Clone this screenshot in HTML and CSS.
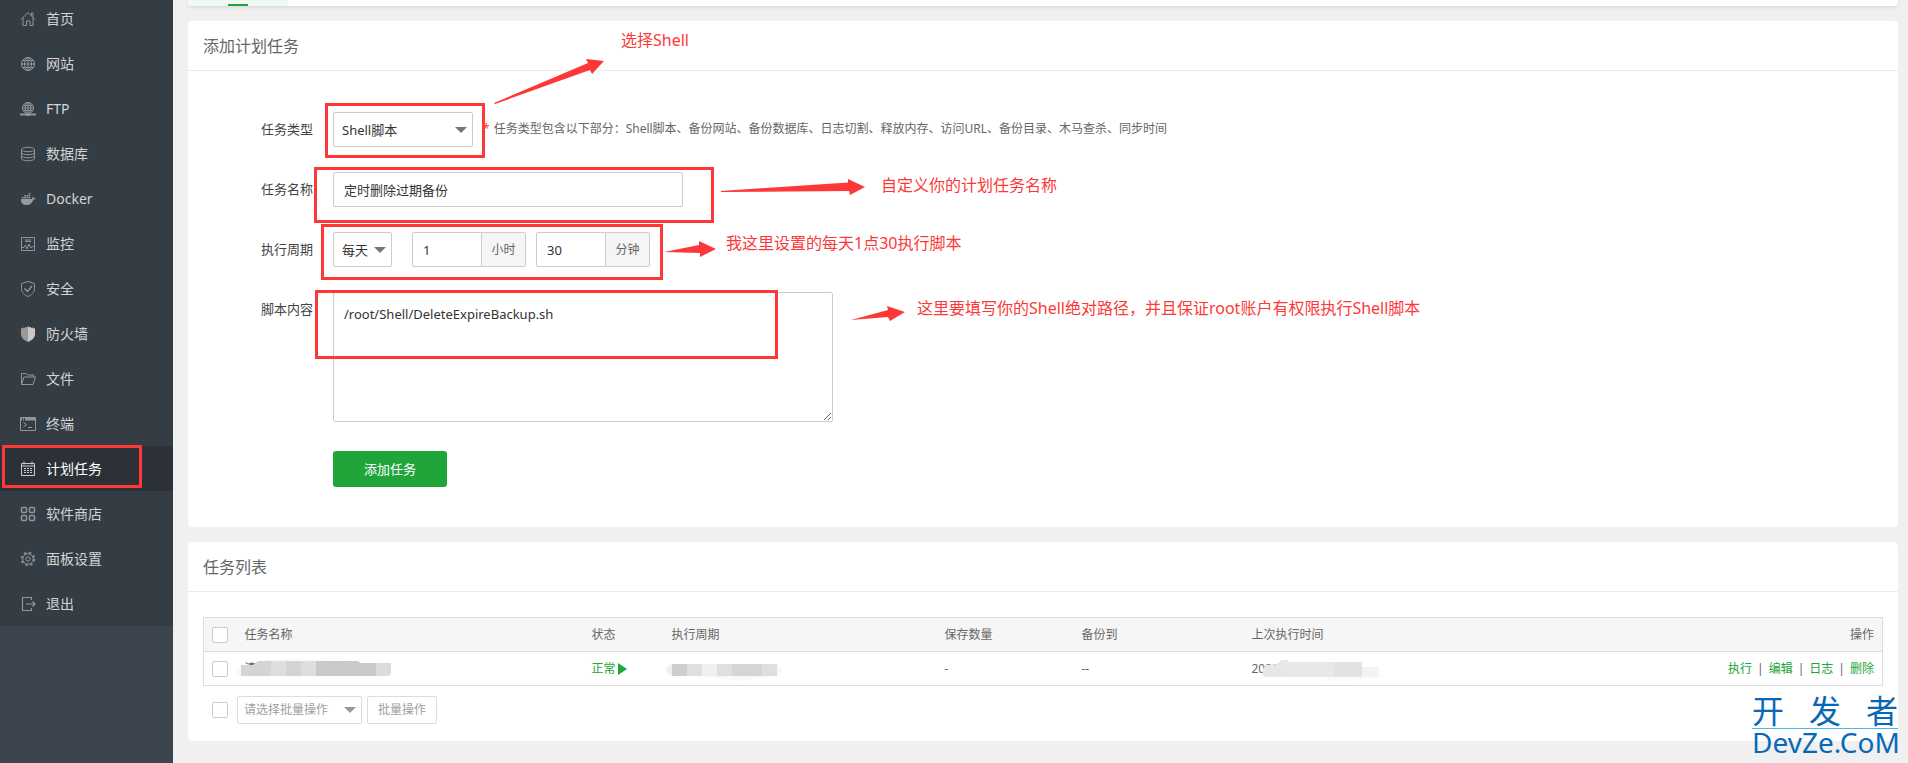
FILE: index.html
```
<!DOCTYPE html>
<html lang="zh-CN">
<head>
    <meta charset="UTF-8">
    <meta name="viewport" content="width=device-width, initial-scale=1.0">
    <title>计划任务</title>
    <link rel="stylesheet" href="styles.css">
</head>
<body>
    <nav class="sidebar">
        <ul class="menu">
            <li><a href="#"><svg viewBox="0 0 16 16"><path d="M1 8.500L8 1.500l7 7M3 7v7.500h3.500v-4.500h3.500v4.500H13V7M11.500 4.500V2h1.500v4"/></svg>首页</a></li>
            <li><a href="#"><svg viewBox="0 0 16 16"><circle cx="8" cy="8" r="6.500"/><ellipse cx="8" cy="8" rx="3.500" ry="6.500"/><path d="M8 1.500v13M1.500 8h13M2.500 4.500h11M2.500 11.500h11"/></svg>网站</a></li>
            <li><a href="#"><svg viewBox="0 0 16 16"><circle cx="8" cy="7" r="5.500"/><ellipse cx="8" cy="7" rx="2.800" ry="5.500"/><path d="M8 1.500v11M2.500 7h11M3.500 4.500h9M3.500 9.500h9"/><path d="M0 13.500h16M6 14h4" stroke-width="2"/></svg>FTP</a></li>
            <li><a href="#"><svg viewBox="0 0 16 16"><ellipse cx="8" cy="3.500" rx="6.500" ry="2.200"/><path d="M1.500 3.500v9c0 3 13 3 13 0v-9M1.500 6.500c0 3 13 3 13 0M1.500 9.500c0 3 13 3 13 0"/></svg>数据库</a></li>
            <li><a href="#"><svg viewBox="0 0 16 16" class="solid"><path d="M1 8h10.500c1 0 1.300-1.500.800-2.500 1 0 1.500.800 1.500 1.500.700-.200 1.500 0 2 .200-.400 1-1.300 1.300-2.300 1.300C12.500 12 10 14 6.500 14 3 14 .500 12 1 8zM2 6h1.700v1.500H2zM4.200 6h1.700v1.500H4.200zM6.400 6h1.700v1.500H6.400zM8.600 6h1.700v1.500H8.600zM4.200 4h1.700v1.500H4.200zM6.400 4h1.700v1.500H6.400zM8.600 4h1.700v1.500H8.600zM8.600 2h1.700v1.500H8.600z"/></svg>Docker</a></li>
            <li><a href="#"><svg viewBox="0 0 16 16"><path d="M1.500 1.500h13v13h-13zM5 4h6M5 5.500h6M2 11.500h2l1.500-2.500 1.500 4 2-5 1.500 3.500h1l1-1.500 1.500 1.500"/></svg>监控</a></li>
            <li><a href="#"><svg viewBox="0 0 16 16"><path d="M8 .500l6.500 2v5c0 4-3 6.500-6.500 8-3.500-1.500-6.500-4-6.500-8v-5z"/><path d="M4.500 7.500l3 3 4.500-5.500" stroke-width="1.500"/></svg>安全</a></li>
            <li><a href="#"><svg viewBox="0 0 16 16" class="solid"><path d="M1 2l2 .500V1.500l2 .500V1l2 .300L8 0v16C4 14 1 12 1 8z"/><path class="light" d="M15 2l-2 .500V1.500l-2 .500V1l-2 .300L8 0v16c4-2 7-4 7-8z"/></svg>防火墙</a></li>
            <li><a href="#"><svg viewBox="0 0 16 16"><path d="M1.500 13.500v-11h4.500l1.500 1.500h6v2M1.500 13.500L4 6h11.500L13 13.500z"/></svg>文件</a></li>
            <li><a href="#"><svg viewBox="0 0 16 16"><path d="M.500 1.500h15v13H.500zM3.500 6.500l3 2.200-3 2.200M8 11.500h4"/><path d="M1 3h14" stroke-width="3" stroke-dasharray="1 1 1 1 10"/></svg>终端</a></li>
            <li><a href="#" class="active"><svg viewBox="0 0 16 16"><path d="M1.500 2.500h13v12h-13zM1.500 5h13M4 .500v3M12 .500v3"/><path d="M4 7.500h9M4 9.500h9M4 11.500h9" stroke-dasharray="2 1" stroke-width="1.200"/></svg>计划任务</a></li>
            <li><a href="#"><svg viewBox="0 0 16 16"><g stroke-width="1.500"><rect x="1.500" y="1.500" width="5" height="5" rx="1"/><rect x="9.500" y="1.500" width="5" height="5" rx="1"/><rect x="1.500" y="9.500" width="5" height="5" rx="1"/><rect x="9.500" y="9.500" width="5" height="5" rx="1"/></g></svg>软件商店</a></li>
            <li><a href="#"><svg viewBox="0 0 16 16"><circle cx="8" cy="8" r="5.200"/><circle cx="8" cy="8" r="6.500" stroke-width="1.500" stroke-dasharray="2.550"/><circle cx="8" cy="8" r="2.200"/></svg>面板设置</a></li>
            <li><a href="#"><svg viewBox="0 0 16 16"><path d="M11.500 4V1.500h-9v13h9V12M6 8h8.500M12.500 5.500L15 8l-2.500 2.500" stroke-width="1.200"/></svg>退出</a></li>
        </ul>
    </nav>

    <main class="main">
        <div class="tabs"><a href="#" class="tab" aria-label="计划任务"></a></div>

        <section class="card">
            <h2>添加计划任务</h2>
            <form class="task-form">
                <label for="taskType">任务类型</label>
                <div class="field">
                    <span class="select type">
                        <select id="taskType"><option>Shell脚本</option></select>
                    </span>
                    <p class="tip"><span class="star">*</span>任务类型包含以下部分：Shell脚本、备份网站、备份数据库、日志切割、释放内存、访问URL、备份目录、木马查杀、同步时间</p>
                </div>

                <label for="taskName">任务名称</label>
                <div class="field">
                    <input type="text" id="taskName" class="name" value="定时删除过期备份">
                </div>

                <label for="cycle">执行周期</label>
                <div class="field">
                    <span class="select cycle">
                        <select id="cycle"><option>每天</option></select>
                    </span>
                    <div class="unit">
                        <input type="text" id="hour" value="1"><label for="hour">小时</label>
                    </div>
                    <div class="unit">
                        <input type="text" id="minute" value="30"><label for="minute">分钟</label>
                    </div>
                </div>

                <label for="script">脚本内容</label>
                <div class="field">
                    <textarea id="script">/root/Shell/DeleteExpireBackup.sh</textarea>
                </div>

                <button type="button" class="submit">添加任务</button>
            </form>
        </section>

        <section class="card">
            <h2>任务列表</h2>
            <div class="list">
                <table>
                    <thead>
                        <tr>
                            <th class="c-check"><input type="checkbox" aria-label="全选"></th>
                            <th class="c-name">任务名称</th>
                            <th class="c-state">状态</th>
                            <th class="c-cycle">执行周期</th>
                            <th class="c-count">保存数量</th>
                            <th class="c-to">备份到</th>
                            <th class="c-time">上次执行时间</th>
                            <th class="c-action">操作</th>
                        </tr>
                    </thead>
                    <tbody>
                        <tr>
                            <td><input type="checkbox" aria-label="选择任务"></td>
                            <td class="masked">清
                                <svg class="mask" width="160" height="24" viewBox="0 0 160 24">
                                    <path fill="#fafafa" d="M24 5q40-5 87 0l40 4v12H6q-6-5 0-11h18z"/>
                                    <path fill="#d4d4d4" d="M8 9h12l5-4h13v15H8zM53 5h15v15H53z"/>
                                    <path fill="#dedede" d="M38 5h15v15H38zM68 5h15v15H68z"/>
                                    <path fill="#cacaca" d="M83 5h42l3 2h15v13H83z"/>
                                    <path fill="#dcdcdc" d="M143 7h15v11l-3 2h-12z"/>
                                </svg>
                            </td>
                            <td><a href="#" class="state">正常<i class="play"></i></a></td>
                            <td class="masked">
                                <svg class="mask" width="130" height="26" viewBox="0 0 130 26">
                                    <path fill="#f8f8f8" d="M12 8h105q10 6 0 12l-38 5-40-5H12q-10-6 0-12z"/>
                                    <path fill="#cecece" d="M12 8h15v12H12z"/>
                                    <path fill="#dfdfdf" d="M27 8h15v12H27zM57 8h15v12H57zM102 8h15v12h-15z"/>
                                    <path fill="#f0f0f0" d="M12 8v12q-12-6 0-12zM42 8h15v12H42z"/>
                                    <path fill="#d5d5d5" d="M72 8h30v12H72z"/>
                                </svg>
                            </td>
                            <td>-</td>
                            <td>--</td>
                            <td class="masked">2022
                                <svg class="mask" width="150" height="26" viewBox="0 0 150 26">
                                    <path fill="#fafafa" d="M90 20h55l-35 5H85z"/>
                                    <path fill="#e6e6e6" d="M26 9l11-1 5-4h6v17H24q-4-6 2-12z"/>
                                    <path fill="#e8e8e8" d="M42 6h52v15H42z"/>
                                    <path fill="#e2e2e2" d="M94 6h28v15H94z"/>
                                    <path fill="#f3f3f3" d="M122 11h17v10h-17z"/>
                                </svg>
                            </td>
                            <td class="c-action"><a href="#">执行</a><i>|</i><a href="#">编辑</a><i>|</i><a href="#">日志</a><i>|</i><a href="#">删除</a></td>
                        </tr>
                    </tbody>
                </table>
                <div class="batch">
                    <input type="checkbox" aria-label="选择全部任务">
                    <span class="select">
                        <select aria-label="批量操作"><option>请选择批量操作</option></select>
                    </span>
                    <button type="button">批量操作</button>
                </div>
            </div>
        </section>
    </main>

    <!-- 标注 -->
    <div class="notes">
        <svg width="1908" height="763" viewBox="0 0 1908 763">
            <g class="box">
                <rect x="3.500" y="446.500" width="137" height="40"/>
                <rect x="326.500" y="104.500" width="157" height="52"/>
                <rect x="315.500" y="168.500" width="397" height="53"/>
                <rect x="322.500" y="225.500" width="339" height="53"/>
                <rect x="316.500" y="291.500" width="460" height="66"/>
            </g>
            <g class="arrow">
                <path d="M494 103L588 63l-2-4 18 2-12 13-2-4L495 104z"/>
                <path d="M721 191L848 182.500V179l17 8-15 8-1-4-128 1z"/>
                <path d="M664 252l35-7v-4l17 8-16 8v-4z"/>
                <path d="M851 320l37-10-1-4 18 6-15 9-2-4z"/>
            </g>
        </svg>
        <p class="note n1">选择Shell</p>
        <p class="note n2">自定义你的计划任务名称</p>
        <p class="note n3">我这里设置的每天1点30执行脚本</p>
        <p class="note n4">这里要填写你的Shell绝对路径，并且保证root账户有权限执行Shell脚本</p>
    </div>

    <div class="brand">
        <div class="brand-cn"><span>开</span><span>发</span><span>者</span></div>
        <div class="brand-en">DevZe.CoM</div>
    </div>
</body>
</html>
```
FILE: styles.css
```
* {
    box-sizing: border-box;
}
body {
    display: flex;
    min-height: 100vh;
    margin: 0;
    background-color: #f0f0f0;
    color: #666;
    font-family: "Noto Sans", "Noto Sans CJK SC", sans-serif;
    font-size: 12px;
    line-height: 18px;
}
a {
    color: #20a53a;
    text-decoration: none;
}
input, select, textarea, button {
    font: inherit;
    color: #333;
    border: 1px solid #ccc;
    border-radius: 2px;
    background-color: #fff;
}

/* 左侧菜单 */
.sidebar {
    flex: 0 0 173px;
    background-color: #3c444d;
}
.menu {
    margin: -4px 0 0;
    padding: 0;
    list-style: none;
    background-color: #353d44;
}
.menu a {
    display: flex;
    align-items: center;
    gap: 10px;
    height: 45px;
    padding-left: 20px;
    color: #d2d4d6;
    font-size: 14px;
}
.menu .active {
    background-color: #2c3138;
    color: #fff;
}
.menu svg {
    width: 16px;
    height: 16px;
    fill: none;
    stroke: #92969a;
}
.menu .active svg {
    stroke: #c8cacc;
}
.menu .solid {
    fill: #999;
    stroke: none;
}
.menu .light {
    fill: #c8c8c8;
}

/* 内容 */
.main {
    flex: 1;
    padding: 0 10px 0 15px;
}
.tabs {
    height: 6px;
    margin-bottom: 15px;
    background-color: #fff;
    border-radius: 0 0 4px 4px;
    box-shadow: 0 1px 4px rgba(0, 0, 0, 0.12);
}
.tab {
    display: flex;
    align-items: flex-end;
    justify-content: center;
    width: 100px;
    height: 6px;
    background-color: #f0f9f2;
}
.tab::after {
    content: "";
    width: 20px;
    height: 2px;
    background-color: #20a53a;
}
.card {
    margin-bottom: 15px;
    background-color: #fff;
    border-radius: 4px;
}
h2 {
    margin: 0;
    padding: 2px 15px 0;
    border-bottom: 1px solid #ececec;
    font-size: 16px;
    font-weight: normal;
    line-height: 47px;
}
.task-form {
    display: grid;
    grid-template-columns: 125px 1fr;
    gap: 25px 20px;
    padding: 41px 0 40px;
    font-size: 13px;
}
.task-form > label {
    color: #444;
    line-height: 35px;
    text-align: right;
}
.field {
    display: flex;
    align-items: flex-start;
}
.field input, .field select {
    height: 35px;
}
.select {
    position: relative;
    display: inline-block;
}
.select select {
    width: 100%;
    padding: 0 8px;
    appearance: none;
}
.select::after {
    content: "";
    position: absolute;
    top: 50%;
    right: 6px;
    margin-top: -3px;
    border: 6px solid transparent;
    border-top-color: #777;
    border-bottom: 0;
    pointer-events: none;
}
.type {
    width: 140px;
}
.cycle {
    width: 59px;
    margin-right: 20px;
}
.tip {
    margin: 0 0 0 10px;
    font-size: 12px;
    line-height: 34px;
}
.star {
    margin-right: 4px;
    color: #f33;
}
.name {
    width: 350px;
    padding: 0 10px;
}
.unit {
    display: flex;
    margin-right: 10px;
}
.unit input {
    width: 70px;
    padding: 0 10px;
    border-radius: 2px 0 0 2px;
}
.unit label {
    width: 44px;
    border: 1px solid #ccc;
    border-left: 0;
    border-radius: 0 2px 2px 0;
    background-color: #f5f5f5;
    font-size: 12px;
    line-height: 33px;
    text-align: center;
}
textarea {
    width: 500px;
    height: 130px;
    padding: 12px 10px;
}
.submit {
    grid-column: 2;
    justify-self: start;
    width: 114px;
    height: 36px;
    margin-top: 4px;
    border: 0;
    border-radius: 3px;
    background-color: #20a53a;
    color: #fff;
}

/* 任务列表 */
.list {
    padding: 25px 15px 17px;
}
table {
    width: 100%;
    border: 1px solid #ddd;
    border-collapse: collapse;
    table-layout: fixed;
}
th, td {
    height: 34px;
    padding: 0 8px;
    border-bottom: 1px solid #ddd;
    font-weight: normal;
    text-align: left;
}
th {
    background-color: #f6f6f6;
}
input[type="checkbox"] {
    display: block;
    width: 16px;
    height: 16px;
    margin: 0;
    appearance: none;
}
.c-check {
    width: 33px;
}
.c-name {
    width: 347px;
}
.c-state {
    width: 80px;
}
.c-cycle {
    width: 273px;
}
.c-count {
    width: 137px;
}
.c-to {
    width: 170px;
}
.c-action {
    text-align: right;
}
.c-action i {
    margin: 0 5px;
    font-style: normal;
}
.masked {
    position: relative;
}
.mask {
    position: absolute;
    top: 4px;
    left: -4px;
}
.state {
    display: flex;
    align-items: center;
    gap: 2px;
}
.play {
    border: 6px solid transparent;
    border-left: 9px solid #20a53a;
    border-right: 0;
}
.batch {
    display: flex;
    align-items: center;
    gap: 5px;
    margin-top: 10px;
    padding-left: 9px;
}
.batch .select {
    width: 125px;
    margin-left: 4px;
}
.batch select, .batch button {
    height: 28px;
    border-color: #ddd;
    color: #a0a0a0;
}
.batch select {
    padding: 0 6px;
}
.batch .select::after {
    border-top-color: #999;
}
.batch button {
    width: 70px;
    padding: 0;
}

/* 标注 */
.notes {
    position: absolute;
    inset: 0;
    overflow: hidden;
    pointer-events: none;
}
.box {
    fill: none;
    stroke: #fd3838;
    stroke-width: 3;
}
.arrow {
    fill: #fd3838;
}
.note {
    position: absolute;
    margin: 0;
    color: #fd3838;
    font-size: 16px;
    line-height: 24px;
    white-space: nowrap;
}
.n1 {
    left: 621px;
    top: 28px;
}
.n2 {
    left: 881px;
    top: 173px;
}
.n3 {
    left: 726px;
    top: 231px;
}
.n4 {
    left: 917px;
    top: 296px;
}
.brand {
    position: absolute;
    right: 10px;
    bottom: 8px;
    width: 146px;
    color: #0868b8;
}
.brand-cn {
    display: flex;
    justify-content: space-between;
    border-bottom: 1px solid #4ab8f0;
    font-family: "Liberation Sans", "Noto Sans CJK SC", sans-serif;
    font-size: 32px;
    line-height: 32px;
}
.brand-en {
    font-size: 28px;
    line-height: 26px;
}
```
